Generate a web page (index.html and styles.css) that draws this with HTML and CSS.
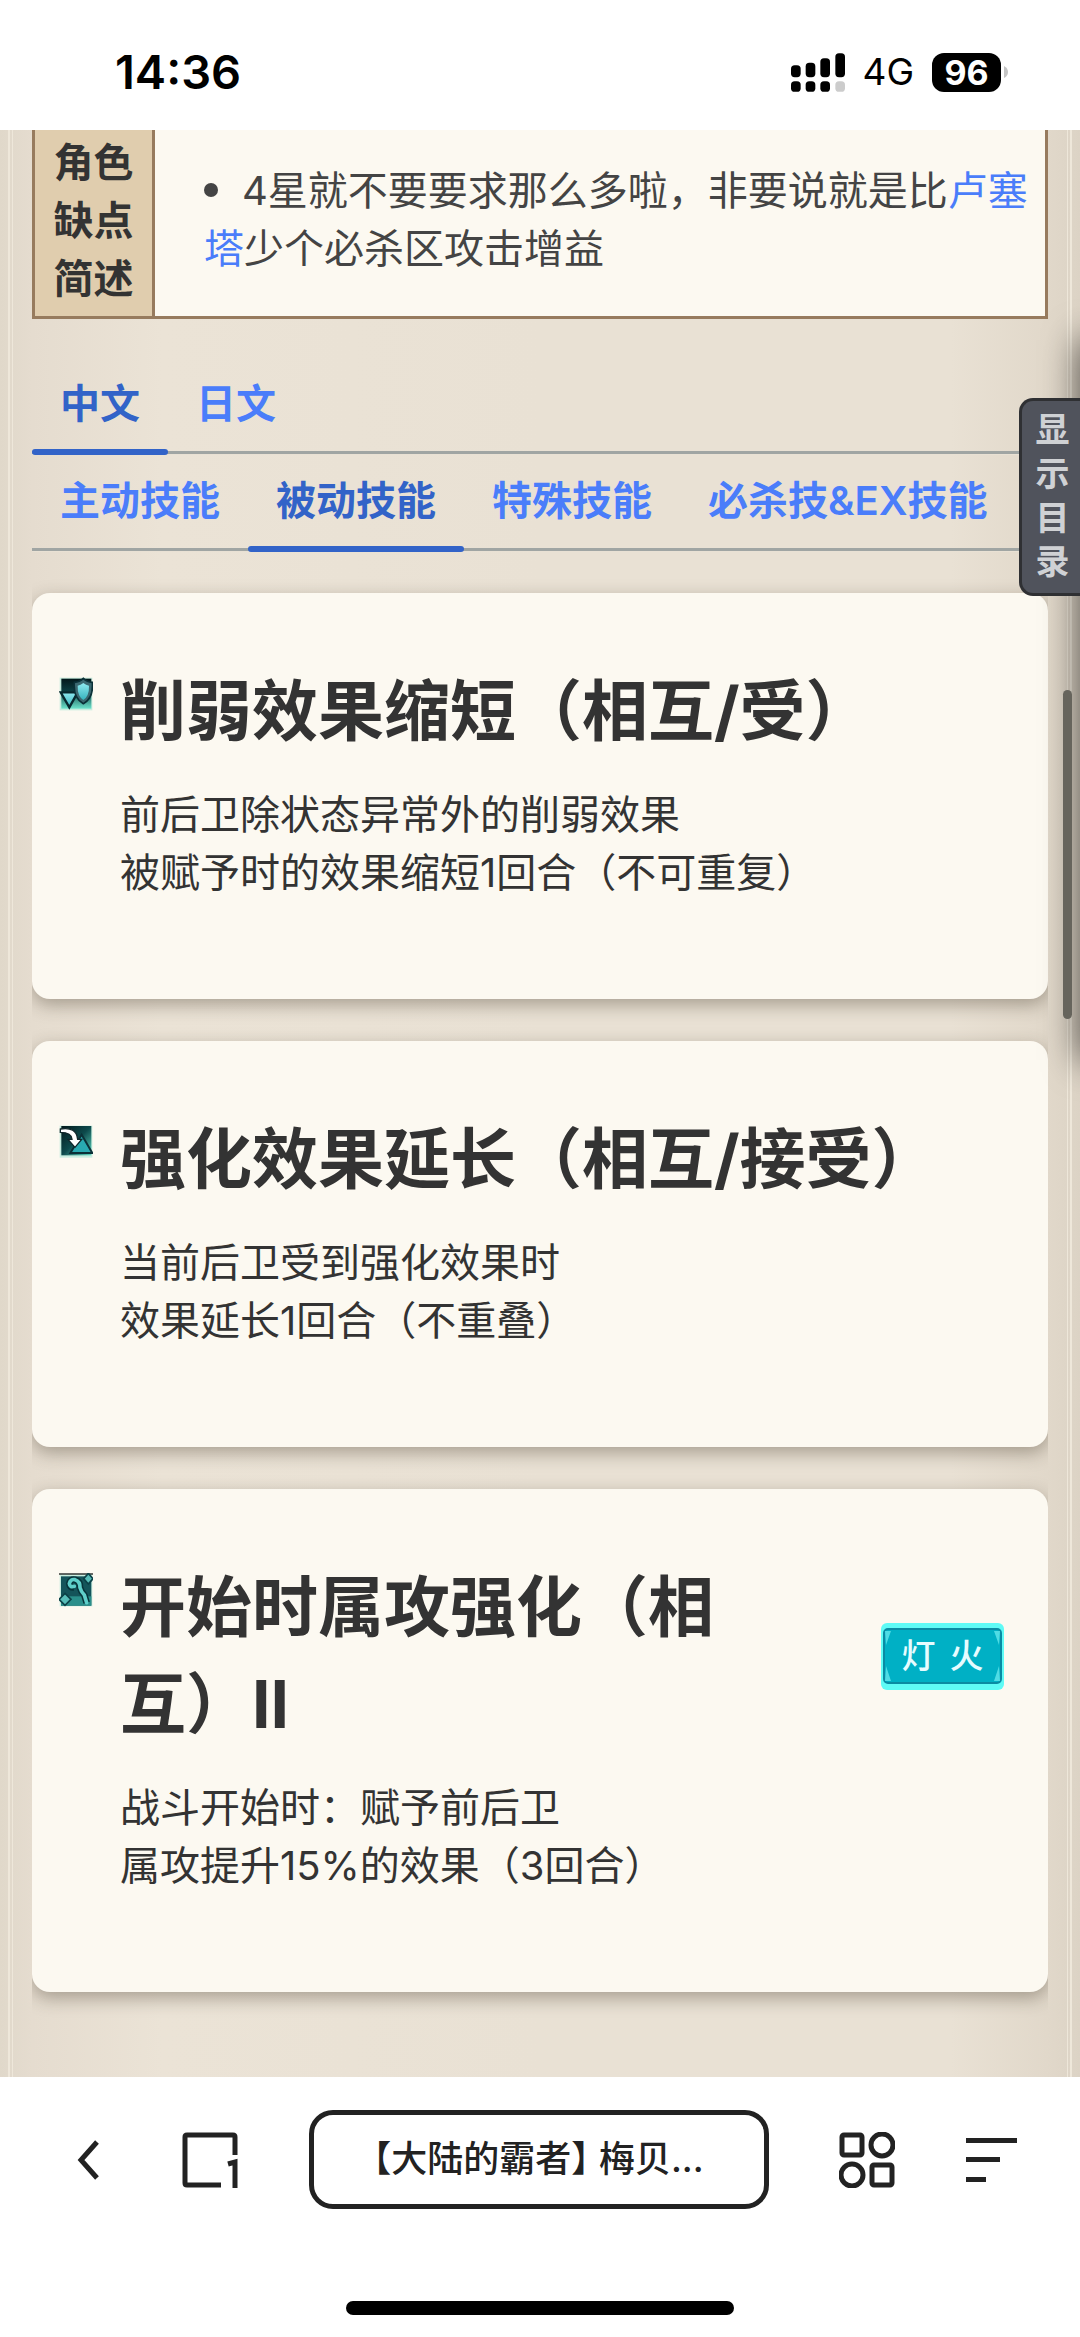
FILE: index.html
```html
<!DOCTYPE html>
<html lang="zh-CN">
<head>
<meta charset="utf-8">
<meta name="viewport" content="width=device-width, initial-scale=1">
<title>【大陆的霸者】 梅贝</title>
<link rel="stylesheet" href="styles.css">
</head>
<body>
<header class="status">
  <time class="clock">14:36</time>
  <div class="status-right">
    <svg class="signal" viewBox="60 66 162 116" aria-hidden="true">
      <rect x="60" y="102" width="29" height="36" rx="11"/>
      <rect x="104" y="95" width="29" height="43" rx="11"/>
      <rect x="148" y="81" width="29" height="57" rx="11"/>
      <rect x="193" y="66" width="29" height="72" rx="11"/>
      <rect x="60" y="150" width="29" height="32" rx="11"/>
      <rect x="104" y="150" width="29" height="32" rx="11"/>
      <rect x="148" y="150" width="29" height="32" rx="11"/>
      <rect x="193" y="150" width="29" height="32" rx="11" fill="#ccc"/>
    </svg>
    <span class="network">4G</span>
    <span class="battery">96</span>
    <svg class="battery-tip" viewBox="0 0 4 12" aria-hidden="true"><path d="M0 0Q4 2 4 6T0 12Z" fill="#c4c4c4"/></svg>
  </div>
</header>

<main class="page">
  <div class="content">
    <table class="info">
      <tr>
        <th scope="row">角色<br>缺点<br>简述</th>
        <td>
          <ul class="notes">
            <li>4星就不要要求那么多啦，非要说就是比<a href="#">卢塞塔</a>少个必杀区攻击增益</li>
          </ul>
        </td>
      </tr>
    </table>

    <nav class="tabs tabs-lang">
      <a class="tab active" href="#">中文</a>
      <a class="tab" href="#">日文</a>
    </nav>
    <nav class="tabs">
      <a class="tab" href="#">主动技能</a>
      <a class="tab active" href="#">被动技能</a>
      <a class="tab" href="#">特殊技能</a>
      <a class="tab" href="#">必杀技&amp;EX技能</a>
    </nav>

    <section class="cards">
      <article class="card">
        <svg class="skill-icon" viewBox="0 0 102 102" aria-hidden="true">
          <defs>
            <linearGradient id="bg" x1="0" y1="0" x2="1" y2="1"><stop offset="0" stop-color="#04191c"/><stop offset=".5" stop-color="#0d4a4c"/><stop offset="1" stop-color="#5fd8c0"/></linearGradient>
            <linearGradient id="fg" x1="0" y1="0" x2="0" y2="1"><stop offset="0" stop-color="#8feaf0"/><stop offset="1" stop-color="#35b3bd"/></linearGradient>
            <linearGradient id="down" x1="0" y1="0" x2="0" y2="1"><stop offset="0" stop-color="#03181b"/><stop offset=".4" stop-color="#0b3c40"/><stop offset="1" stop-color="#6be3cb"/></linearGradient>
          </defs>
          <rect x="2" y="2" width="98" height="98" fill="#c9eee0"/>
          <rect x="7" y="5" width="90" height="90" fill="url(#down)"/>
          <path d="M5 46H56L31 91Z" fill="url(#fg)" stroke="#08292f" stroke-width="7"/>
          <path d="M73 4Q84 15 100 16Q104 64 73 80Q42 64 46 16Q62 15 73 4Z" fill="#3b6870" stroke="#0b3037" stroke-width="5"/>
          <path d="M73 18Q81 25 90 26Q91 57 73 69Q55 57 56 26Q65 25 73 18Z" fill="url(#fg)"/>
        </svg>
        <div class="card-body">
          <div class="card-head"><h2>削弱效果缩短（相互/受）</h2></div>
          <p>前后卫除状态异常外的削弱效果<br>被赋予时的效果缩短1回合（不可重复）</p>
        </div>
      </article>

      <article class="card">
        <svg class="skill-icon" viewBox="0 0 102 102" aria-hidden="true">
          <rect x="2" y="2" width="98" height="96" fill="#c9eee0"/>
          <rect x="7" y="3" width="90" height="88" fill="url(#bg)"/>
          <path d="M68 29L100 84H34Z" fill="#29a9b0" stroke="#0b3037" stroke-width="6"/>
          <path d="M4 12Q52 4 56 43H68L48 67L27 43H39Q38 22 4 22Z" fill="#fff" stroke="#10262a" stroke-width="4"/>
        </svg>
        <div class="card-body">
          <div class="card-head"><h2>强化效果延长（相互/接受）</h2></div>
          <p>当前后卫受到强化效果时<br>效果延长1回合（不重叠）</p>
        </div>
      </article>

      <article class="card">
        <svg class="skill-icon" viewBox="0 0 102 102" aria-hidden="true">
          <rect x="2" y="2" width="98" height="98" fill="#c9eee0"/>
          <rect x="0" y="1" width="102" height="4" fill="#222"/>
          <rect x="6" y="10" width="91" height="88" fill="#14545a"/>
          <rect x="6" y="70" width="91" height="28" fill="#2a8f8b"/>
          <path d="M44 43Q32 44 31 32Q34 17 48 20Q64 25 63 44Q66 56 76 66L83 89" fill="none" stroke="#07343a" stroke-width="20" stroke-linejoin="round"/>
          <path d="M46 40Q32 44 31 32Q34 17 48 20Q64 25 63 44Q66 56 76 66L83 89" fill="none" stroke="#5fcfca" stroke-width="11" stroke-linejoin="round" stroke-linecap="round"/>
          <path d="M88 1L102 17L88 33L74 17ZM18 61L36 79L18 97L0 79Z" fill="#57bdb8" stroke="#0b4147" stroke-width="5"/>
        </svg>
        <div class="card-body">
          <div class="card-head">
            <h2>开始时属攻强化（相互）II</h2>
            <span class="badge">
              <svg class="badge-frame" viewBox="0 0 123 67" preserveAspectRatio="none" aria-hidden="true">
                <rect width="123" height="67" rx="6" fill="#5ffbf6"/>
                <rect x="3" y="6" width="117" height="54" rx="4" fill="#00b0c5" stroke="#0a8ba3" stroke-width="2"/>
                <path d="M4 8H10L5 22ZM119 8H113L118 22ZM4 58H10L5 43ZM119 58H113L118 43Z" fill="#4fdce5"/>
              </svg>
              <span class="badge-text"><span>灯</span><span>火</span></span>
            </span>
          </div>
          <p>战斗开始时：赋予前后卫<br>属攻提升15%的效果（3回合）</p>
        </div>
      </article>
    </section>
  </div>

  <div class="drawer-edge"></div>
  <button class="toc-toggle" type="button">显示目录</button>
  <div class="scroll-thumb"></div>
</main>

<footer class="browser-bar">
  <div class="controls">
    <button class="icon-btn back" type="button" aria-label="返回">
      <svg width="24" height="40" viewBox="0 0 24 40"><path d="M20 2L4 20L20 38" fill="none" stroke="#222" stroke-width="5"/></svg>
    </button>
    <button class="icon-btn windows" type="button" aria-label="窗口">
      <svg width="56" height="56" viewBox="0 0 56 56"><path d="M53 23V5Q53 3 51 3H5Q3 3 3 5V51Q3 53 5 53H39M46 32L53 30V56" fill="none" stroke="#222" stroke-width="5"/></svg>
    </button>
    <button class="address" type="button">【大陆的霸者】 梅贝...</button>
    <button class="icon-btn apps" type="button" aria-label="应用">
      <svg width="56" height="56" viewBox="0 0 56 56" fill="none" stroke="#222" stroke-width="5"><rect x="3" y="3" width="20" height="20" rx="2"/><circle cx="43" cy="13" r="11"/><circle cx="13" cy="43" r="11"/><rect x="33" y="33" width="20" height="20" rx="2"/></svg>
    </button>
    <button class="icon-btn menu" type="button" aria-label="菜单">
      <svg width="52" height="46" viewBox="0 0 52 46" fill="#222"><rect y="1" width="51" height="5"/><rect y="20" width="34" height="5"/><rect y="40" width="20" height="5"/></svg>
    </button>
  </div>
  <div class="home-indicator"></div>
</footer>
</body>
</html>
```
FILE: styles.css
```css
* {
  box-sizing: border-box;
}

body {
  margin: 0;
  min-height: 100vh;
  display: flex;
  flex-direction: column;
  background: #fff;
  color: #333;
  font-family: Inter, "Noto Sans CJK SC", sans-serif;
  font-size: 40px;
  line-height: 58px;
}

a {
  color: #4a7dfa;
  text-decoration: none;
}

button {
  margin: 0;
  padding: 0;
  border: 0;
  background: none;
  color: inherit;
  font: inherit;
}

svg {
  display: block;
}

/* Status bar */
.status {
  display: flex;
  justify-content: space-between;
  align-items: center;
  padding: 43px 72px 29px 115px;
  color: #000;
}

.clock {
  font-size: 47px;
  font-weight: 600;
}

.status-right {
  display: flex;
  align-items: center;
}

.signal {
  width: 54px;
  height: 39px;
  margin-right: 17px;
}

.network {
  margin-right: 18px;
  font-size: 37px;
}

.battery {
  width: 69px;
  margin-right: 3px;
  border-radius: 12px;
  background: #000;
  color: #fff;
  font-size: 34px;
  font-weight: 700;
  line-height: 39px;
  text-align: center;
}

.battery-tip {
  width: 4px;
  height: 12px;
}

/* Page */
.page {
  flex: 1;
  position: relative;
  overflow: hidden;
  padding: 0 32px 84px;
  background:
    linear-gradient(90deg, transparent 8px, #eee7da 8px, #eee7da 10px, transparent 10px, transparent 12px, #eee7da 12px, #eee7da 13px, transparent 13px),
    linear-gradient(270deg, transparent 8px, #eee7da 8px, #eee7da 10px, transparent 10px, transparent 12px, #eee7da 12px, #eee7da 13px, transparent 13px),
    linear-gradient(90deg, #e0d8ca, #e5dccf 32px, #ebe3d6 15%, #e9e1d4 50%, #e9e1d4 88%, #e1d8ca 97%, #dcd3c5);
}

.content {
  overflow-x: clip;
}

.info {
  width: 100%;
  border-collapse: collapse;
  border: 3px solid #977b5e;
  border-top: 0;
  background: #fcf9f1;
}

.info th {
  width: 120px;
  padding: 4px 0 8px;
  border-right: 3px solid #977b5e;
  background: #e0cdae;
  font-weight: 600;
}

.info td {
  padding: 32px 8px 38px 49px;
  color: #444;
  vertical-align: top;
}

.notes {
  margin: 0;
  padding: 0;
  list-style: none;
}

.notes li::before {
  content: "";
  display: inline-block;
  width: 14px;
  height: 14px;
  margin-right: 24px;
  border-radius: 50%;
  background: #444;
  vertical-align: 8px;
}

/* Tabs */
.tabs {
  display: flex;
  box-shadow: inset 0 -1px #e9e1d4, inset 0 -4px #a0a5a3;
}

.tabs-lang {
  margin-top: 39px;
}

.tab {
  position: relative;
  padding: 17px 28px 22px;
  font-weight: 600;
  white-space: nowrap;
}

.tab.active {
  color: #3263c8;
}

.tab.active::after {
  content: "";
  position: absolute;
  inset: auto 0 0;
  height: 6px;
  border-radius: 3px;
  background: #3263c8;
}

/* Skill cards */
.cards {
  display: flex;
  flex-direction: column;
  gap: 42px;
  padding: 41px 0 0;
}

.card {
  display: flex;
  gap: 27px;
  padding: 70px 44px 97px 27px;
  border-radius: 18px;
  background: #fcf9f1;
  box-shadow: 0 6px 18px rgba(60, 50, 35, 0.38);
}

.skill-icon {
  flex: none;
  width: 34px;
  height: 34px;
  margin-top: 14px;
}

.card-body {
  flex: 1;
}

.card-head {
  display: flex;
  align-items: center;
  gap: 110px;
  margin-bottom: 26px;
}

.card h2 {
  flex: 1;
  margin: 0;
  font-size: 66px;
  font-weight: 700;
  line-height: 97px;
}

.card p {
  margin: 0;
}

.badge {
  flex: none;
  position: relative;
  width: 123px;
  height: 67px;
}

.badge-frame {
  width: 100%;
  height: 100%;
}

.badge-text {
  position: absolute;
  inset: 0;
  display: flex;
  justify-content: center;
  align-items: center;
  gap: 14px;
  color: #e6fcff;
  font-size: 34px;
  font-weight: 500;
}

/* Overlays at the right edge */
.drawer-edge {
  position: absolute;
  top: 210px;
  left: 100%;
  width: 40px;
  height: 720px;
  box-shadow: 0 0 36px rgba(0, 0, 0, 0.65);
}

.toc-toggle {
  position: absolute;
  top: 268px;
  right: 0;
  width: 61px;
  padding: 7px 10px 9px 13px;
  border: 3px solid #2f3033;
  border-right: 0;
  border-radius: 14px 0 0 14px;
  background: #50535c;
  color: #cfd1d4;
  font-size: 34px;
  font-weight: 600;
  line-height: 44px;
  word-break: break-all;
}

.scroll-thumb {
  position: absolute;
  top: 560px;
  right: 8px;
  width: 9px;
  height: 329px;
  border-radius: 5px;
  background: #66645c;
}

/* Browser bar */
.browser-bar {
  display: flex;
  flex-direction: column;
  align-items: center;
  gap: 92px;
  padding: 33px 0 22px;
  color: #222;
}

.controls {
  display: flex;
  align-items: center;
  justify-content: space-between;
  width: 100%;
  padding: 0 62px 0 77px;
}

.back {
  width: 34px;
}

.address {
  width: 460px;
  padding: 19px 0 20px;
  border: 5px solid #222;
  border-radius: 24px;
  font-size: 36px;
  font-weight: 500;
  line-height: 50px;
  white-space: nowrap;
  font-feature-settings: "halt";
}

.home-indicator {
  width: 36%;
  height: 14px;
  border-radius: 7px;
  background: #000;
}
```
